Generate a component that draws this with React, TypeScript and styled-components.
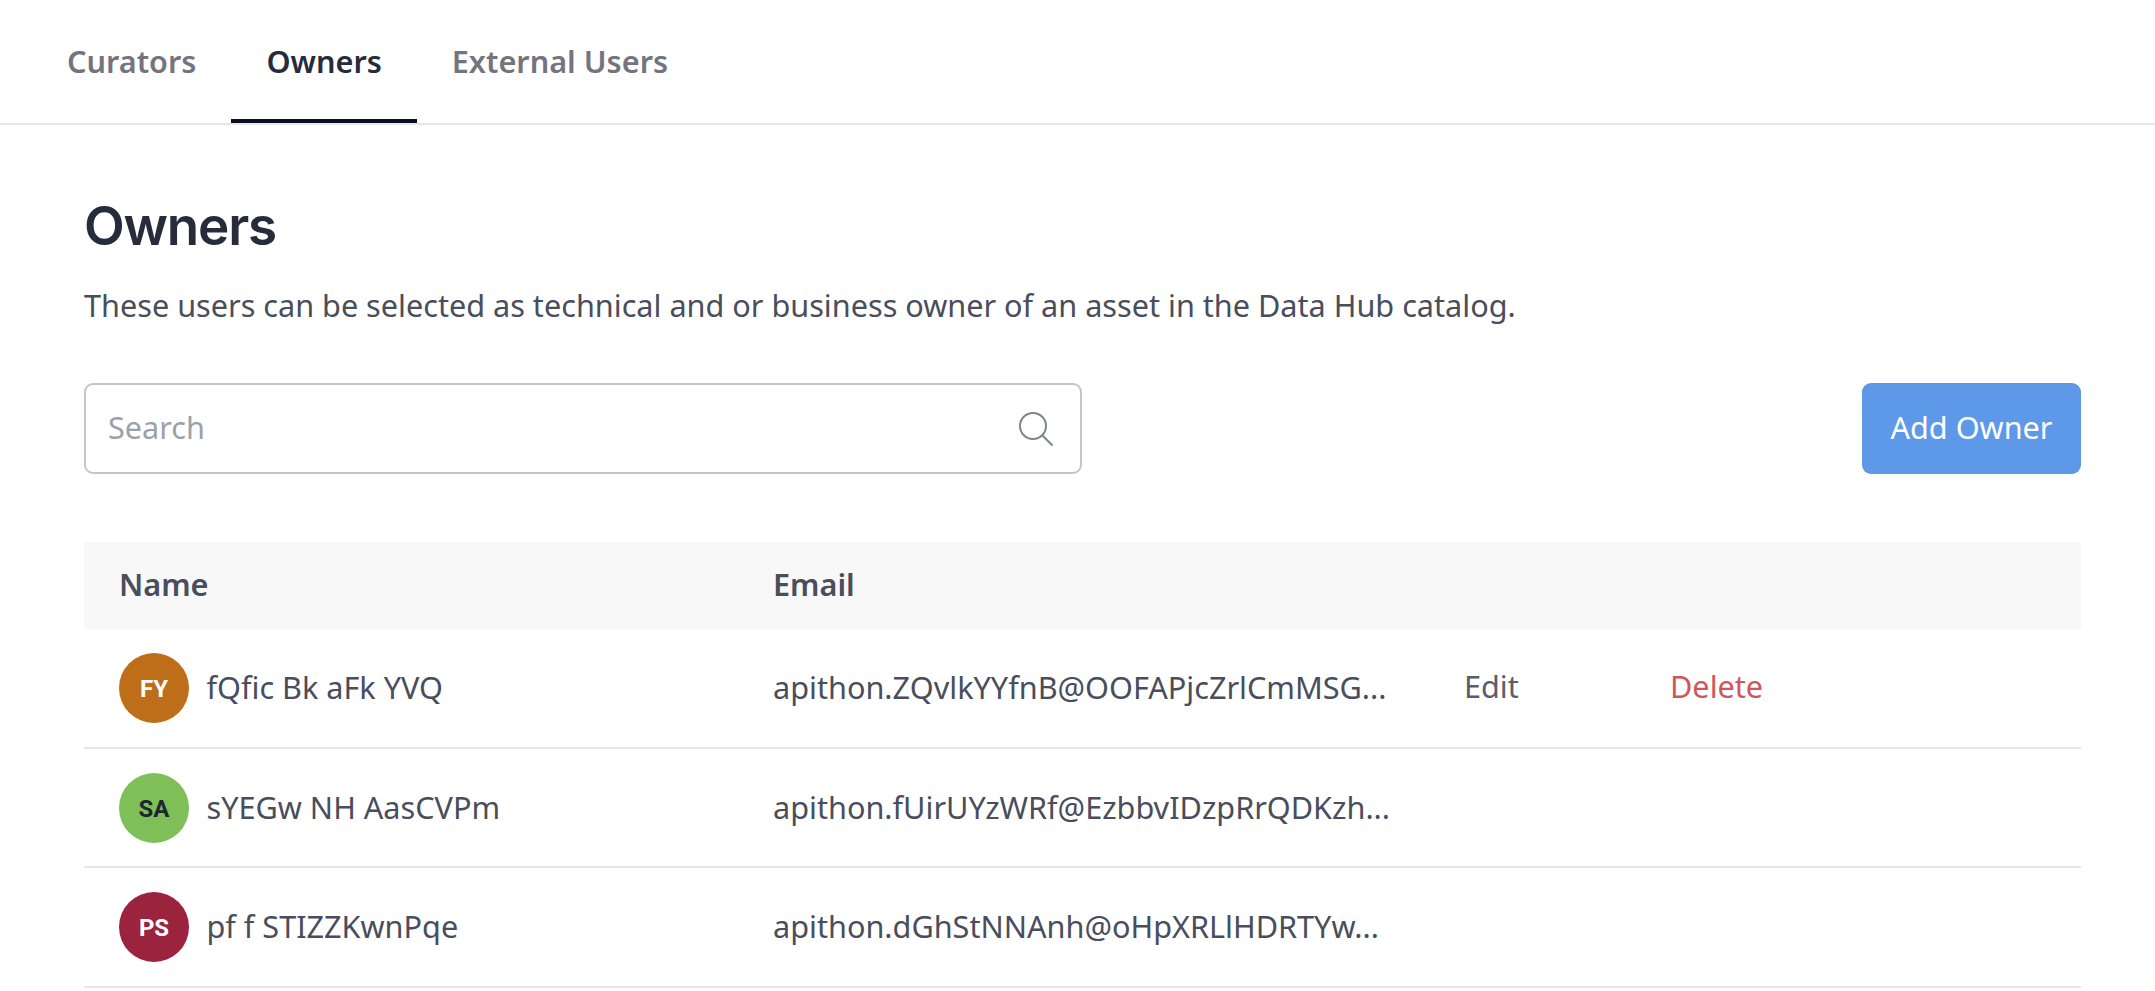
import React from "react";
import styled, { createGlobalStyle } from "styled-components";

const GlobalStyle = createGlobalStyle`
  * { box-sizing: border-box; }
  html, body { margin: 0; background: #fff; }
  body {
    font-family: "Noto Sans", sans-serif;
    font-size: 30.63px;
    line-height: 46px;
    color: #494d5c;
    overflow: hidden;
  }
`;

const Page = styled.div`
  height: 991px;
  overflow: hidden;
`;

const TabBar = styled.nav`
  display: flex;
  height: 125px;
  padding-left: 32px;
  border-bottom: 2px solid #e6e6e6;
`;

const Tab = styled.button<{ $active?: boolean }>`
  height: 123px;
  padding: 3px 35px 0;
  border: 0;
  border-bottom: 4px solid ${(p) => (p.$active ? "#0a0f24" : "transparent")};
  background: none;
  font: inherit;
  font-weight: 600;
  color: ${(p) => (p.$active ? "#272c3c" : "#74747f")};
`;

const Content = styled.main`
  padding: 68px 74px 0 84px;
`;

const Title = styled.h1`
  margin: 0;
  font-family: Inter, sans-serif;
  font-size: 53px;
  font-weight: 600;
  line-height: 66px;
  letter-spacing: -1.2px;
  color: #272c3c;
`;

const Description = styled.p`
  margin: 23px 0 0;
`;

const Toolbar = styled.div`
  display: flex;
  justify-content: space-between;
  margin-top: 55px;
`;

const SearchBox = styled.label`
  display: flex;
  align-items: center;
  width: 998px;
  height: 91px;
  padding: 0 27px 0 22px;
  border: 2px solid #c4c4cc;
  border-radius: 9px;
`;

const SearchInput = styled.input`
  flex: 1;
  min-width: 0;
  padding: 0 0 3px;
  border: 0;
  outline: 0;
  background: none;
  font: inherit;
  color: inherit;
  &::placeholder { color: #9da0aa; opacity: 1; }
`;

const SearchIcon = styled.svg`
  width: 34px;
  height: 33px;
  overflow: visible;
`;

const AddButton = styled.button`
  width: 219px;
  height: 91px;
  padding: 0 0 3px;
  border: 0;
  border-radius: 9px;
  background: #5e98e9;
  font: inherit;
  color: #fff;
`;

const Table = styled.div`
  margin-top: 68px;
`;

const Row = styled.div`
  display: grid;
  grid-template-columns: 654px 691px 206px auto;
  align-items: center;
  height: 119.5px;
  padding: 1px 0 0 35px;
  border-bottom: 2px solid #e6e6e6;
`;

const HeaderRow = styled(Row)`
  height: 87px;
  padding: 0 0 3px 35px;
  border: 0;
  background: #f8f8f8;
  font-weight: 600;
`;

const Person = styled.div`
  display: flex;
  align-items: center;
  gap: 17.5px;
`;

const Avatar = styled.span<{ $bg: string; $fg: string }>`
  display: flex;
  align-items: center;
  justify-content: center;
  width: 70px;
  height: 70px;
  padding-top: 2px;
  border-radius: 50%;
  background: ${(p) => p.$bg};
  color: ${(p) => p.$fg};
  font-family: Roboto, sans-serif;
  font-size: 24px;
  font-weight: 700;
`;

const CellText = styled.span`
  padding-bottom: 2px;
  white-space: nowrap;
`;

const Action = styled.button<{ $danger?: boolean }>`
  justify-self: start;
  padding: 0 0 4px;
  border: 0;
  background: none;
  font: inherit;
  color: ${(p) => (p.$danger ? "#d1565a" : "#5a5d6b")};
`;

const owners = [
  { initials: "FY", bg: "#be6e19", fg: "#fff", name: "fQfic Bk aFk YVQ", email: "apithon.ZQvlkYYfnB@OOFAPjcZrlCmMSG...", actions: true },
  { initials: "SA", bg: "#7fbf57", fg: "#1d2730", name: "sYEGw NH AasCVPm", email: "apithon.fUirUYzWRf@EzbbvIDzpRrQDKzh..." },
  { initials: "PS", bg: "#9b233e", fg: "#fff", name: "pf f STIZZKwnPqe", email: "apithon.dGhStNNAnh@oHpXRLlHDRTYw..." },
];

export default function App() {
  return (
    <Page>
      <GlobalStyle />
      <TabBar>
        <Tab>Curators</Tab>
        <Tab $active>Owners</Tab>
        <Tab>External Users</Tab>
      </TabBar>
      <Content>
        <Title>Owners</Title>
        <Description>
          These users can be selected as technical and or business owner of an asset in the Data Hub catalog.
        </Description>
        <Toolbar>
          <SearchBox>
            <SearchInput placeholder="Search" />
            <SearchIcon viewBox="0 0 34 33" fill="none" stroke="#80838f" strokeWidth="2">
              <circle cx="14" cy="14" r="13" />
              <path d="M23.2 23.2 33.5 33.5" />
            </SearchIcon>
          </SearchBox>
          <AddButton>Add Owner</AddButton>
        </Toolbar>
        <Table>
          <HeaderRow>
            <span>Name</span>
            <span>Email</span>
          </HeaderRow>
          {owners.map((o) => (
            <Row key={o.initials}>
              <Person>
                <Avatar $bg={o.bg} $fg={o.fg}>{o.initials}</Avatar>
                <CellText>{o.name}</CellText>
              </Person>
              <CellText>{o.email}</CellText>
              {o.actions && (
                <>
                  <Action>Edit</Action>
                  <Action $danger>Delete</Action>
                </>
              )}
            </Row>
          ))}
        </Table>
      </Content>
    </Page>
  );
}
